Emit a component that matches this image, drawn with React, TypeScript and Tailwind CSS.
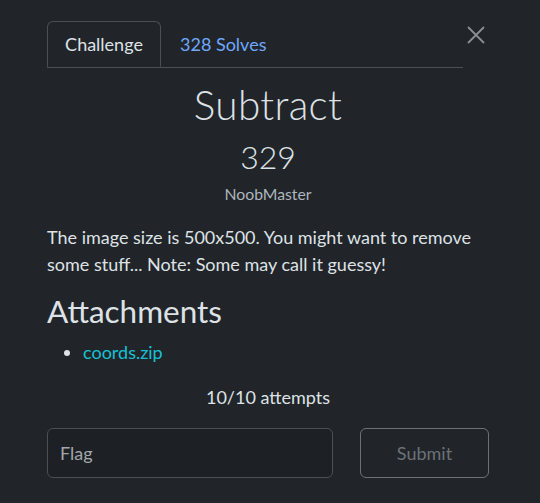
import React from "react";

const App: React.FC = () => {
  return (
    <div
      className="w-[540px] h-[503px] bg-[#212529] text-[#dee2e6] overflow-hidden"
      style={{ fontFamily: "Lato, 'Open Sans', sans-serif" }}
    >
      <div className="pl-[47px] pt-[21px] w-[489px]">
        <div className="flex items-start">
          <div className="flex w-[416px] border-b border-[#495057]">
            <div className="h-[46px] w-[114px] flex items-center justify-center border border-[#495057] border-b-[#212529] rounded-t-[6px] mb-[-1px] text-[18px] leading-[27px] text-[#dee2e6]">
              Challenge
            </div>
            <div className="h-[46px] pl-[19px] pr-[20px] flex items-center text-[18px] leading-[27px] text-[#6ea8fe]">
              328 Solves
            </div>
          </div>
          <button className="ml-[4px] mt-[5px] w-[18px] h-[18px] flex items-center justify-center">
            <svg width="18" height="18" viewBox="0 0 18 18" fill="none" stroke="#8b8e92" strokeWidth="1.8">
              <path d="M1 1 L17 17 M17 1 L1 17" />
            </svg>
          </button>
        </div>

        <div className="flex flex-col items-center mt-[13px]">
          <h2 className="text-[40.5px] leading-[48px] font-light tracking-[0.3px] text-[#dee2e6]">Subtract</h2>
          <div className="text-[32px] leading-[38px] mt-[8.5px] font-light text-[#dee2e6]">329</div>
          <div className="text-[15.75px] leading-[24px] mt-[6px] text-[#adb5bd]">NoobMaster</div>
        </div>

        <p className="mt-[18px] text-[18px] leading-[27px] text-[#dee2e6]">
          The image size is 500x500. You might want to remove some stuff... Note: Some may call it guessy!
        </p>

        <h3 className="mt-[14px] text-[31.5px] leading-[38px] text-[#dee2e6]">Attachments</h3>
        <ul className="mt-[9px] pl-[36px] list-disc text-[18px] leading-[27px]">
          <li className="text-[#dee2e6]">
            <a className="text-[#17c1d4]">coords.zip</a>
          </li>
        </ul>

        <div className="mt-[18px] text-center text-[18px] leading-[27px] text-[#dee2e6]">
          10/10 attempts
        </div>

        <div className="flex mt-[17.5px] gap-[27px]">
          <div className="w-[286px] h-[50px] rounded-[6px] border border-[#495057] bg-[#1d2024] flex items-center px-[12px] text-[18px] text-[#a3a7ab]">
            Flag
          </div>
          <button className="w-[129px] h-[50px] rounded-[6px] border border-[#6c7177] flex items-center justify-center text-[18px] text-[#6c7177]">
            Submit
          </button>
        </div>
      </div>
    </div>
  );
};

export default App;
